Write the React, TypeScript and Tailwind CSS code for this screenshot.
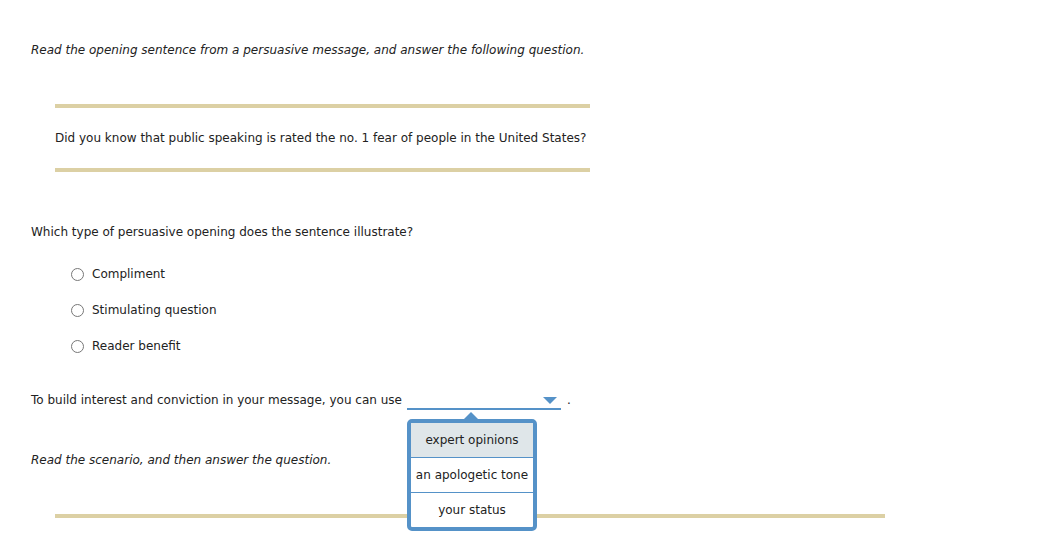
import React from 'react'

const options = ['Compliment', 'Stimulating question', 'Reader benefit']
const choices = ['expert opinions', 'an apologetic tone', 'your status']

const Radio = ({ label }: { label: string }) => (
  <label className="flex items-center h-4 mt-5 first:mt-0">
    <span className="w-[13px] h-[13px] rounded-full border border-[#777] bg-white shrink-0" />
    <span className="ml-[8px]">{label}</span>
  </label>
)

const Dropdown = () => (
  <span className="relative inline-block align-top w-[154px] h-[18px] border-b-2 border-[#5592c8] ml-[5px]">
    <svg className="absolute right-[4px] top-[5px]" width="14" height="7" viewBox="0 0 14 7">
      <path d="M0 0 H14 L7 7 Z" fill="#5592c8" />
    </svg>
    <div className="absolute left-0 top-[27px] z-10">
      <svg className="absolute left-[56px] -top-[7px]" width="16" height="8" viewBox="0 0 16 8">
        <path d="M0 8 L8 0 L16 8 Z" fill="#5592c8" />
      </svg>
      <ul className="w-[130px] border-4 border-[#5592c8] rounded-[5px] bg-white overflow-hidden">
        {choices.map((c, i) => (
          <li
            key={c}
            className={
              'flex items-center justify-center ' +
              (i === 0 ? 'h-[34px] bg-[#dfe6e9]' : 'h-[35px] border-t border-[#5592c8]')
            }
          >
            {c}
          </li>
        ))}
      </ul>
    </div>
  </span>
)

export default function App() {
  return (
    <div className="min-h-[539px] bg-white text-[#222] text-[12px] leading-4 font-['DejaVu_Sans',sans-serif] pl-[31px] pt-[42px]">
      <p className="italic">
        Read the opening sentence from a persuasive message, and answer the following question.
      </p>

      <div className="ml-[24px] w-[535px] mt-[46px] border-y-4 border-[#dcd0a4] pt-[22px] pb-[22px]">
        <p>Did you know that public speaking is rated the no. 1 fear of people in the United States?</p>
      </div>

      <p className="mt-[52px]">Which type of persuasive opening does the sentence illustrate?</p>

      <div className="mt-[26px] pl-[40px] flex flex-col">
        {options.map((o) => (
          <Radio key={o} label={o} />
        ))}
      </div>

      <p className="mt-[38px]">
        To build interest and conviction in your message, you can use
        <Dropdown />
        <span className="ml-[6px]">.</span>
      </p>

      <p className="italic mt-[42px]">Read the scenario, and then answer the question.</p>

      <div className="ml-[24px] w-[830px] mt-[46px] h-[4px] bg-[#dcd0a4]" />
    </div>
  )
}
